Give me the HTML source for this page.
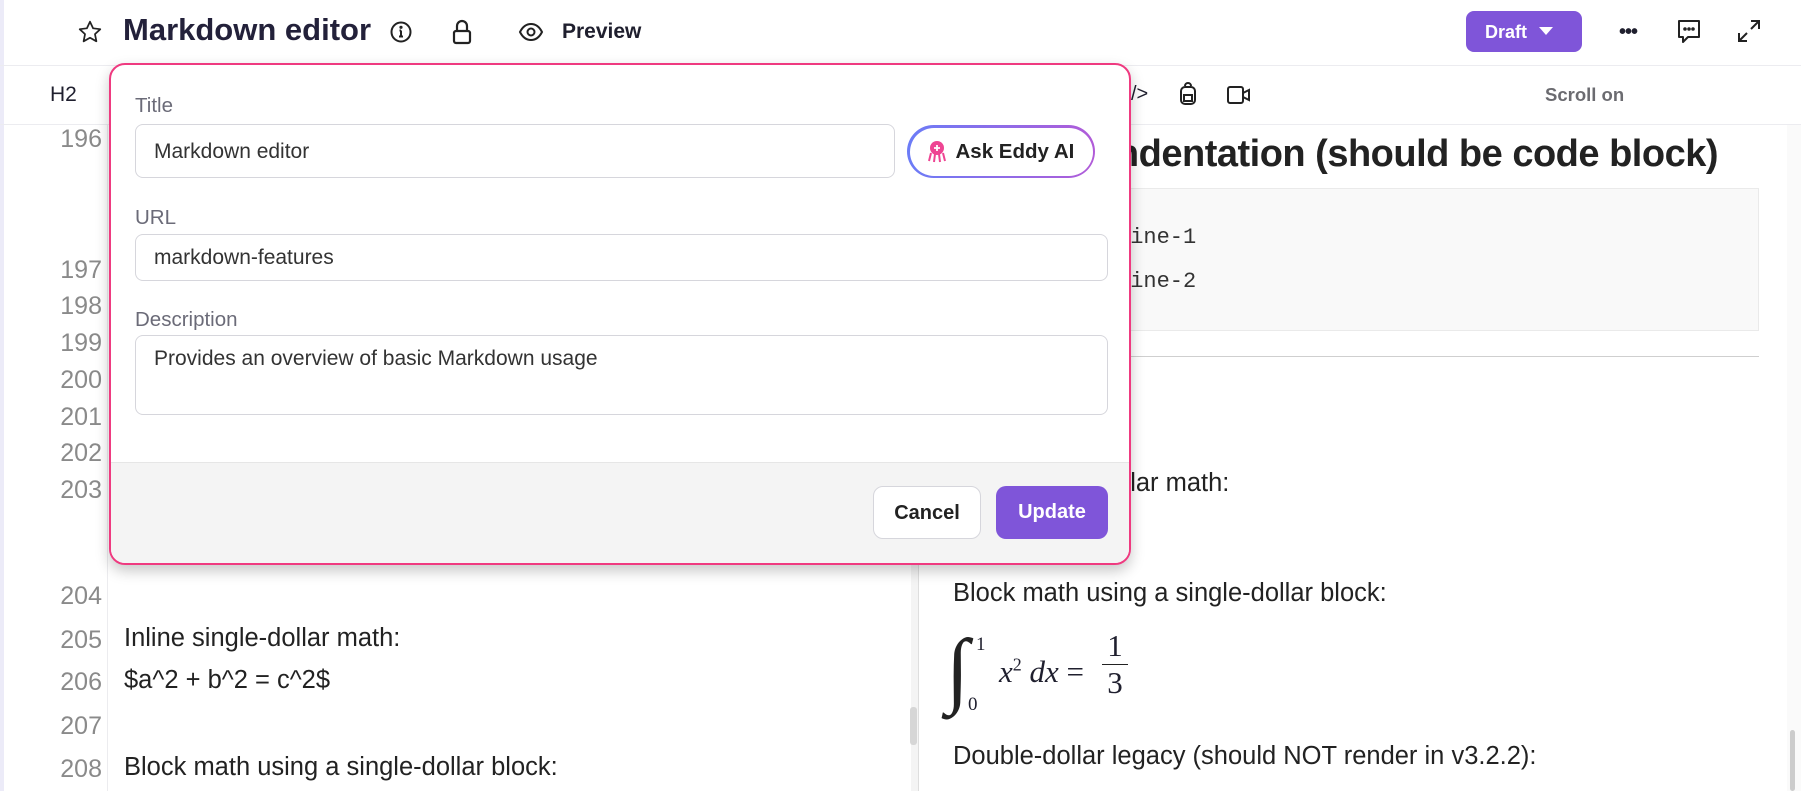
<!DOCTYPE html>
<html><head><meta charset="utf-8"><style>
*{box-sizing:border-box;margin:0;padding:0}
body{width:1801px;height:791px;overflow:hidden;background:#fff;font-family:"Liberation Sans",sans-serif;position:relative;color:#1f1f2e}
.a{position:absolute}
.ln{position:absolute;left:30px;width:72px;text-align:right;color:#8a8a8a;font-size:25px}
.tx{position:absolute;left:124px;font-size:25.5px;color:#222}
.rt{position:absolute;left:953px;font-size:25.5px;color:#222;white-space:nowrap}
.lbl{position:absolute;left:135px;font-size:20.5px;color:#6b6b78}
.inp{position:absolute;left:135px;border:1px solid #d6d6dc;border-radius:8px;background:#fff;font-size:21px;color:#333;padding-left:18px}
.code{position:absolute;left:1117px;font-family:'Liberation Mono',monospace;font-size:22px;color:#333}
</style></head><body>
<div class="a" style="left:0;top:0;width:4px;height:791px;background:#ecebf8"></div>
<!-- header -->
<svg class="a" style="left:77px;top:19px" width="26" height="26" viewBox="0 0 24 24" fill="none" stroke="#222" stroke-width="1.6" stroke-linejoin="round"><path d="M12 2.5l2.9 6.1 6.6.8-4.9 4.6 1.3 6.6L12 17.3l-5.9 3.3 1.3-6.6-4.9-4.6 6.6-.8z"/></svg>
<div class="a" style="left:123px;top:12px;font-size:31px;font-weight:bold;color:#23213a">Markdown editor</div>
<svg class="a" style="left:389px;top:20px" width="24" height="24" viewBox="0 0 24 24" fill="none" stroke="#222" stroke-width="2"><circle cx="12" cy="12" r="9.5"/><path d="M12 10.5v6M10 16.5h4M10.5 10.5H12"/><circle cx="12" cy="7.3" r=".6" fill="#222"/></svg>
<svg class="a" style="left:451px;top:18px" width="22" height="28" viewBox="0 0 22 28" fill="none" stroke="#222" stroke-width="2.2"><path d="M6 13V8a5 5 0 0110 0v5"/><rect x="3" y="13" width="16" height="12" rx="2"/></svg>
<svg class="a" style="left:518px;top:22px" width="26" height="20" viewBox="0 0 26 20" fill="none" stroke="#222" stroke-width="2"><path d="M2 10C5 4 9 2 13 2s8 2 11 8c-3 6-7 8-11 8S5 16 2 10z"/><circle cx="13" cy="10" r="3.5"/></svg>
<div class="a" style="left:562px;top:20px;font-size:21px;font-weight:bold">Preview</div>
<div class="a" style="left:1466px;top:11px;width:116px;height:41px;background:#7f55d9;border-radius:8px;color:#fff;font-size:18px;font-weight:bold;padding:11px 0 0 19px">Draft<span style="display:inline-block;margin-left:12px;width:0;height:0;border-left:7px solid transparent;border-right:7px solid transparent;border-top:8px solid #fff;vertical-align:3px"></span></div>
<div class="a" style="left:1619px;top:21px;font-size:20px;font-weight:bold;letter-spacing:-1px">•••</div>
<svg class="a" style="left:1676px;top:18px" width="26" height="28" viewBox="0 0 26 28" fill="none" stroke="#222" stroke-width="2"><path d="M3 3h20v16H12l-5 5v-5H3z" stroke-linejoin="round"/><circle cx="9" cy="11" r=".8" fill="#222"/><circle cx="13" cy="11" r=".8" fill="#222"/><circle cx="17" cy="11" r=".8" fill="#222"/></svg>
<svg class="a" style="left:1736px;top:18px" width="26" height="26" viewBox="0 0 26 26" fill="none" stroke="#222" stroke-width="2"><path d="M15 3h8v8M23 3l-8 8M11 23H3v-8M3 23l8-8"/></svg>
<div class="a" style="left:0;top:65px;width:1801px;height:1px;background:#ececf0"></div>
<!-- toolbar -->
<div class="a" style="left:50px;top:83px;font-size:21px">H2</div>
<div class="a" style="left:1131px;top:83px;font-size:20px">/&gt;</div>
<svg class="a" style="left:1178px;top:82px" width="20" height="24" viewBox="0 0 20 24" fill="none" stroke="#222" stroke-width="2"><path d="M7 4a3 3 0 016 0"/><rect x="3" y="5" width="14" height="17" rx="4"/><path d="M6 13h8v6H6z"/></svg>
<svg class="a" style="left:1226px;top:85px" width="26" height="20" viewBox="0 0 26 20" fill="none" stroke="#222" stroke-width="2"><rect x="2" y="2" width="15" height="16" rx="2"/><path d="M17 8l6-3v10l-6-3"/></svg>
<div class="a" style="left:1545px;top:84px;font-size:18.5px;font-weight:bold;color:#6b6b70">Scroll on</div>
<div class="a" style="left:0;top:124px;width:1801px;height:1px;background:#ececf0"></div>
<!-- left editor -->
<div class="a" style="left:107px;top:125px;width:1px;height:666px;background:#ececef"></div>
<div class="a" style="left:911px;top:125px;width:8px;height:666px;background:#f4f4f4"></div>
<div class="a" style="left:910px;top:707px;width:7px;height:38px;background:#d6d6d6;border-radius:3px"></div>
<div class="a" style="left:918px;top:125px;width:1px;height:666px;background:#dedede"></div>
<div class="ln" style="top:125px">196</div>
<div class="ln" style="top:256px">197</div>
<div class="ln" style="top:292px">198</div>
<div class="ln" style="top:329px">199</div>
<div class="ln" style="top:366px">200</div>
<div class="ln" style="top:403px">201</div>
<div class="ln" style="top:439px">202</div>
<div class="ln" style="top:476px">203</div>
<div class="ln" style="top:582px">204</div>
<div class="ln" style="top:626px">205</div>
<div class="ln" style="top:668px">206</div>
<div class="ln" style="top:712px">207</div>
<div class="ln" style="top:755px">208</div>
<div class="tx" style="top:624px">Inline single-dollar math:</div>
<div class="tx" style="top:666px">$a^2 + b^2 = c^2$</div>
<div class="tx" style="top:753px">Block math using a single-dollar block:</div>
<!-- right preview -->
<div class="a" style="left:1787px;top:125px;width:14px;height:666px;background:#fafafa"></div>
<div class="a" style="left:1790px;top:730px;width:5px;height:61px;background:#ccc;border-radius:3px"></div>
<div class="a" style="left:590px;top:133px;font-size:38px;font-weight:bold;color:#222;letter-spacing:-0.5px;white-space:nowrap;width:1128px;text-align:right">Indentation (should be code block)</div>
<div class="a" style="left:953px;top:188px;width:806px;height:143px;background:#f9f9f9;border:1px solid #eaeaea"></div>
<div class="code" style="top:225px">Line-1</div>
<div class="code" style="top:269px">Line-2</div>
<div class="a" style="left:953px;top:356px;width:806px;height:1px;background:#cfcfcf"></div>
<div class="rt" style="top:469px">Inline single-dollar math:</div>
<div class="rt" style="top:579px">Block math using a single-dollar block:</div>
<div class="a" style="left:946px;top:620px;font-family:'Liberation Serif',serif;font-size:84px;font-style:italic;color:#222;line-height:100px">∫</div>
<div class="a" style="left:976px;top:634px;font-family:'Liberation Serif',serif;font-size:19px">1</div>
<div class="a" style="left:968px;top:694px;font-family:'Liberation Serif',serif;font-size:19px">0</div>
<div class="a" style="left:999px;top:654px;font-family:'Liberation Serif',serif;font-size:31px;font-style:italic;white-space:nowrap">x<sup style="font-size:18px;font-style:normal">2</sup> dx <span style="font-style:normal">=</span></div>
<div class="a" style="left:1102px;top:628px;font-family:'Liberation Serif',serif;font-size:31px;text-align:center;width:26px;line-height:36px">1<div style="border-top:1.5px solid #222"></div>3</div>
<div class="rt" style="top:742px">Double-dollar legacy (should NOT render in v3.2.2):</div>
<!-- modal -->
<div class="a" style="left:109px;top:63px;width:1022px;height:502px;border:2.5px solid #ef3a80;border-radius:16px;background:#fff;overflow:hidden;box-shadow:0 6px 14px rgba(0,0,0,.22)">
<div class="a" style="left:0;top:397px;width:1020px;height:110px;background:#f4f4f4;border-top:1px solid #e6e6e6"></div>
</div>
<div class="lbl" style="top:94px">Title</div>
<div class="inp" style="top:124px;width:760px;height:54px;padding-top:15px">Markdown editor</div>
<div class="a" style="left:907px;top:125px;width:188px;height:53px;border-radius:27px;background:linear-gradient(90deg,#6b7cf7,#b15bd8);padding:2.5px"><div style="width:100%;height:100%;background:#fff;border-radius:25px;font-size:20.5px;font-weight:bold;color:#222;padding:12px 0 0 46px;position:relative;white-space:nowrap">Ask Eddy AI<svg style="position:absolute;left:17px;top:12px" width="20" height="24" viewBox="0 0 20 24"><circle cx="10" cy="8" r="7" fill="#ee4593"/><path d="M10 5v6M7 8h6" stroke="#fff" stroke-width="1.8"/><path d="M4 13l-2 8M8 14l-1 8M12 14l1 8M16 13l2 8" stroke="#ee4593" stroke-width="2"/></svg></div></div>
<div class="lbl" style="top:206px">URL</div>
<div class="inp" style="top:234px;width:973px;height:47px;padding-top:11px">markdown-features</div>
<div class="lbl" style="top:308px">Description</div>
<div class="inp" style="top:335px;width:973px;height:80px;padding-top:11px">Provides an overview of basic Markdown usage</div>
<div class="a" style="left:873px;top:486px;width:108px;height:53px;border:1px solid #d6d6dc;border-radius:10px;background:#fff;font-size:20px;font-weight:bold;text-align:center;padding-top:15px;color:#222">Cancel</div>
<div class="a" style="left:996px;top:486px;width:112px;height:53px;border-radius:10px;background:#7f55d9;font-size:20px;font-weight:bold;text-align:center;padding-top:15px;color:#fff">Update</div>
</body></html>
